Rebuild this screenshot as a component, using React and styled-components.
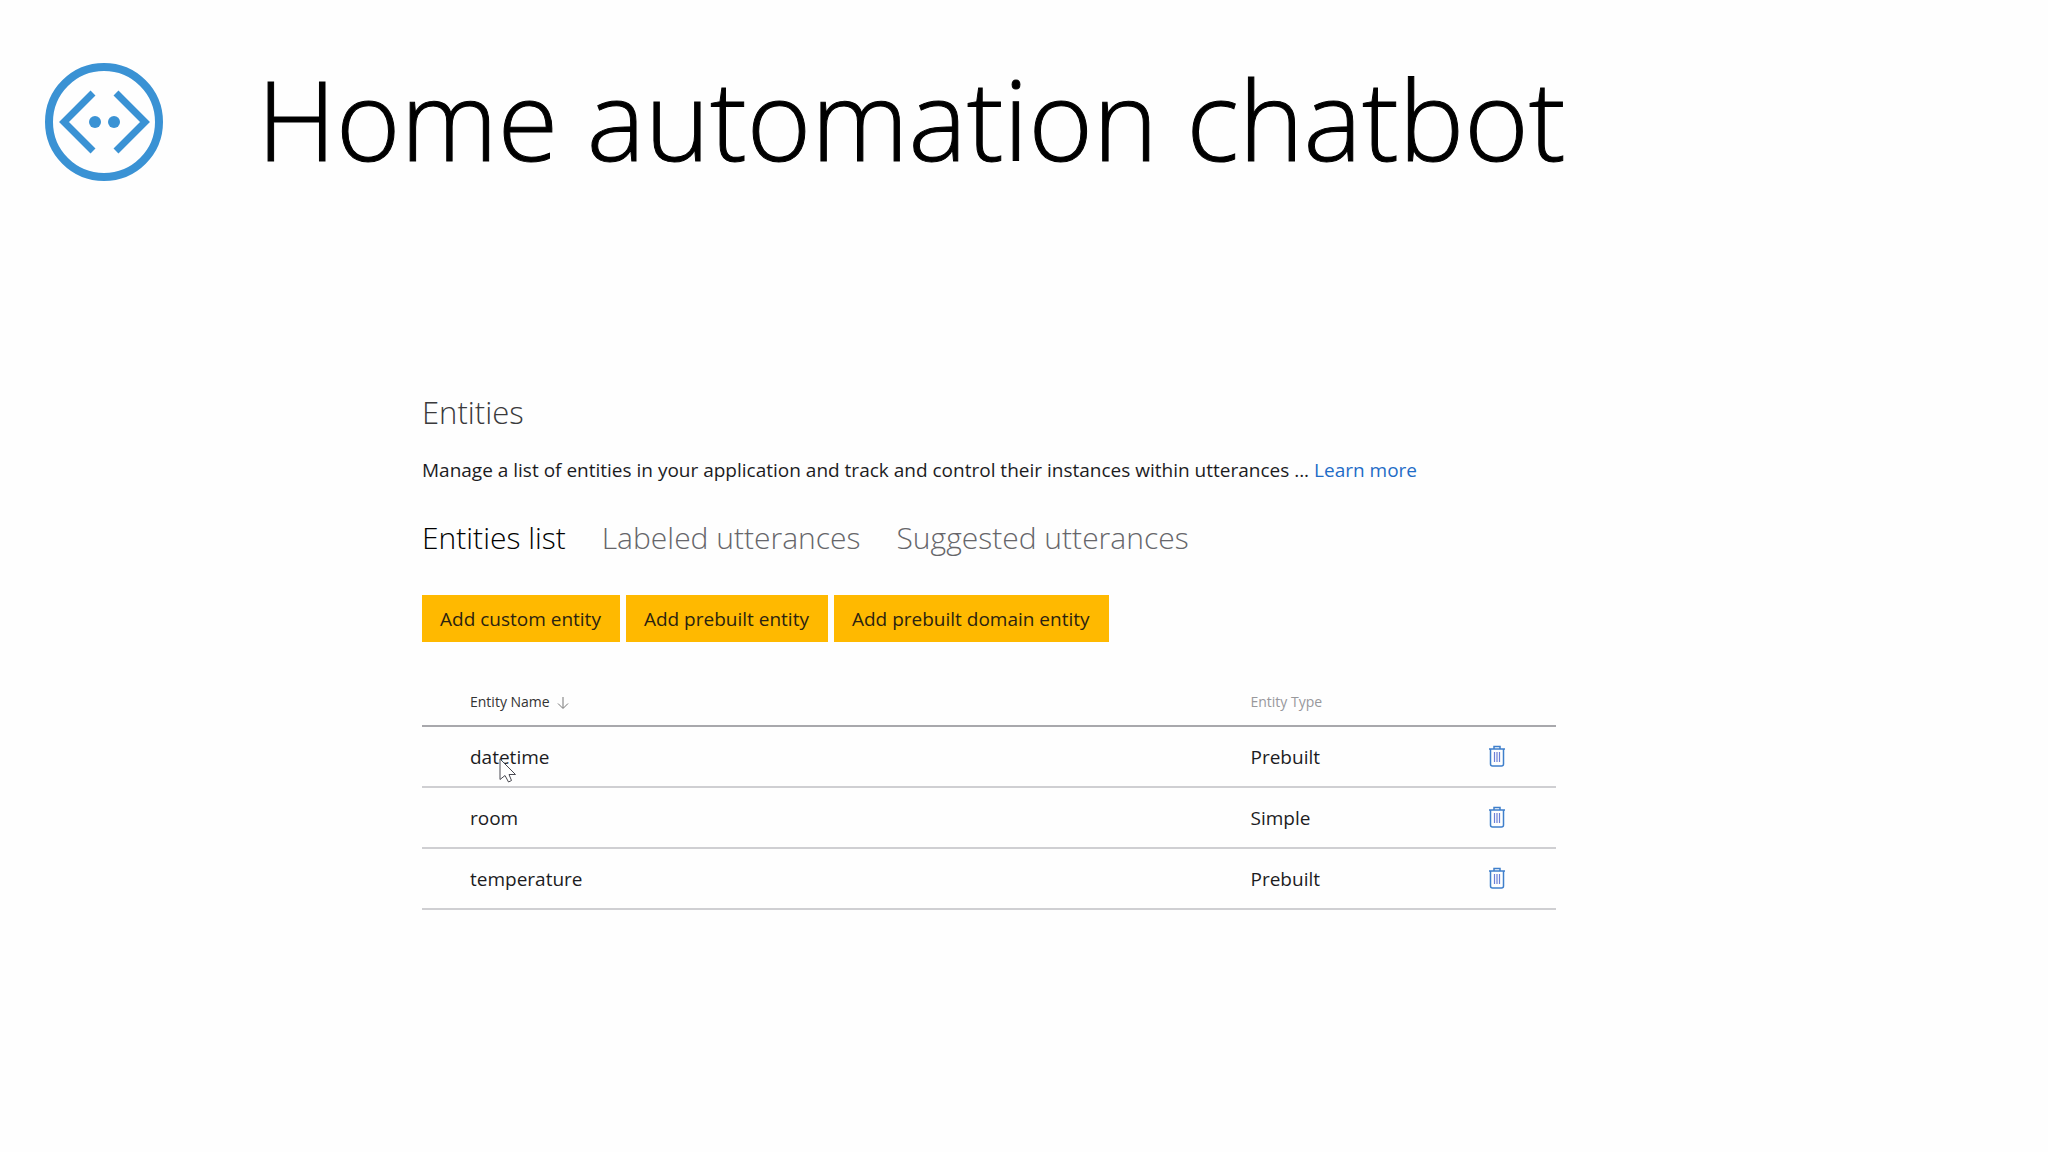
import styled, { createGlobalStyle } from 'styled-components'

const entities = [
    { name: 'datetime', type: 'Prebuilt' },
    { name: 'room', type: 'Simple' },
    { name: 'temperature', type: 'Prebuilt' },
]

const BotLogo = () => {
    return <svg width="120" height="120" viewBox="0 0 120 120" fill="none" stroke="#3a92d4" aria-hidden="true">
        <circle cx="60" cy="60" r="55" strokeWidth="8" />
        <path d="M49 31L20 60L49 89" strokeWidth="7" />
        <path d="M72 31L101 60L72 89" strokeWidth="7" />
        <circle cx="51" cy="60" r="6" fill="#3a92d4" stroke="none" />
        <circle cx="70" cy="60" r="6" fill="#3a92d4" stroke="none" />
    </svg>
}

const SortArrow = () => {
    return <svg width="12" height="14" viewBox="0 0 12 14" fill="none" stroke="#777" aria-hidden="true">
        <path d="M6 1V12M1 7.500L6 12.500L11 7.500" />
    </svg>
}

const TrashIcon = () => {
    return <svg width="18" height="22" viewBox="0 0 18 22" fill="none" stroke="#3f7fcb" aria-hidden="true">
        <path d="M1 4H17M6 4V1.500H12V4" strokeWidth="1.500" />
        <path d="M2.500 4V19Q2.500 21 4.500 21H13.500Q15.500 21 15.500 19V4" strokeWidth="1.500" />
        <path d="M6.500 7V17M9 7V17M11.500 7V17" stroke="#6b7fd6" strokeWidth="1.200" />
    </svg>
}

const Cursor = () => {
    return <Pointer width="18" height="26" viewBox="0 0 18 26" aria-hidden="true">
        <path d="M1 1V21.500L6 17.500L9.500 24L12.500 22.500L10 16.500H16.500Z" fill="#fff" stroke="#4a4a52" />
    </Pointer>
}

const App = () => {
    return <Page>
        <GlobalStyle />
        <Header>
            <BotLogo />
            <Title>Home automation chatbot</Title>
        </Header>
        <Panel>
            <Heading>Entities</Heading>
            <Intro>
                Manage a list of entities in your application and track and control their instances within utterances ... <a href="#learn">Learn more</a>
            </Intro>
            <Tabs>
                <Tab href="#list" $active>Entities list</Tab>
                <Tab href="#labeled">Labeled utterances</Tab>
                <Tab href="#suggested">Suggested utterances</Tab>
            </Tabs>
            <Actions>
                <Button type="button">Add custom entity</Button>
                <Button type="button">Add prebuilt entity</Button>
                <Button type="button">Add prebuilt domain entity</Button>
            </Actions>
            <Table>
                <thead>
                    <tr>
                        <HeadCell $dark>Entity Name <SortArrow /></HeadCell>
                        <HeadCell $width="238px">Entity Type</HeadCell>
                        <HeadCell $width="68px" aria-label="Actions" />
                    </tr>
                </thead>
                <tbody>
                    {entities.map((entity, i) => (
                        <tr key={entity.name}>
                            <Cell>
                                <Name>{entity.name}{i === 0 && <Cursor />}</Name>
                            </Cell>
                            <Cell>{entity.type}</Cell>
                            <Cell>
                                <IconButton type="button" aria-label={`Delete ${entity.name}`}><TrashIcon /></IconButton>
                            </Cell>
                        </tr>
                    ))}
                </tbody>
            </Table>
        </Panel>
    </Page>
}

export default App;

const GlobalStyle = createGlobalStyle`
    * {
        box-sizing: border-box;
    }

    body {
        margin: 0;
        background: #fefefe;
        color: #1c1c1e;
        font-family: "Open Sans", "Noto Sans", sans-serif;
        font-size: 19px;
    }
`

const Page = styled.main`
    min-height: 100vh;
`

const Header = styled.header`
    display: flex;
    align-items: center;
    gap: 93px;
    height: 204px;
    padding: 40px 44px 0;
`

const Title = styled.h1`
    margin: 0;
    color: #000;
    font-size: 110px;
    font-weight: 300;
    line-height: 150px;
    padding-bottom: 8px;
    white-space: nowrap;
    -webkit-text-stroke: 1px #000;
`

const Panel = styled.section`
    margin: 184px 24% 0 422px;
`

const Heading = styled.h2`
    margin: 0;
    color: #3a3a3c;
    font-size: 31px;
    font-weight: 300;
    line-height: 48px;
`

const Intro = styled.p`
    margin: 20px 0 0;
    line-height: 28px;
    white-space: nowrap;

    a {
        color: #1f6cc7;
        text-decoration: none;
    }
`

const Tabs = styled.nav`
    display: flex;
    gap: 36px;
    margin-top: 30px;
`

const Tab = styled.a`
    color: ${({ $active }) => ($active ? '#000' : '#66666a')};
    font-size: 30px;
    font-weight: 300;
    line-height: 48px;
    text-decoration: none;
`

const Actions = styled.div`
    display: flex;
    gap: 6px;
    margin-top: 33px;
`

const Button = styled.button`
    height: 47px;
    padding: 0 19px 0 18px;
    border: 0;
    background: #ffb900;
    color: #2b2310;
    font: inherit;
`

const Table = styled.table`
    width: 100%;
    margin-top: 36px;
    border-collapse: collapse;
    table-layout: fixed;
`

const HeadCell = styled.th`
    width: ${({ $width }) => $width || 'auto'};
    height: 48px;
    padding: 0 0 0 ${({ $dark }) => ($dark ? '48px' : '0')};
    border-bottom: 2px solid #a8a8ac;
    color: ${({ $dark }) => ($dark ? '#333' : '#98989c')};
    font-size: 14px;
    font-weight: 400;
    text-align: left;

    svg {
        margin-left: 4px;
        vertical-align: middle;
    }
`

const Cell = styled.td`
    height: 61px;
    padding: 0;
    border-bottom: 2px solid #cfcfd2;

    &:first-child {
        padding-left: 48px;
    }
`

const Name = styled.span`
    position: relative;
`

const Pointer = styled.svg`
    position: absolute;
    top: 14px;
    left: 29px;
`

const IconButton = styled.button`
    display: flex;
    padding: 0 0 2px;
    border: 0;
    background: none;
`
